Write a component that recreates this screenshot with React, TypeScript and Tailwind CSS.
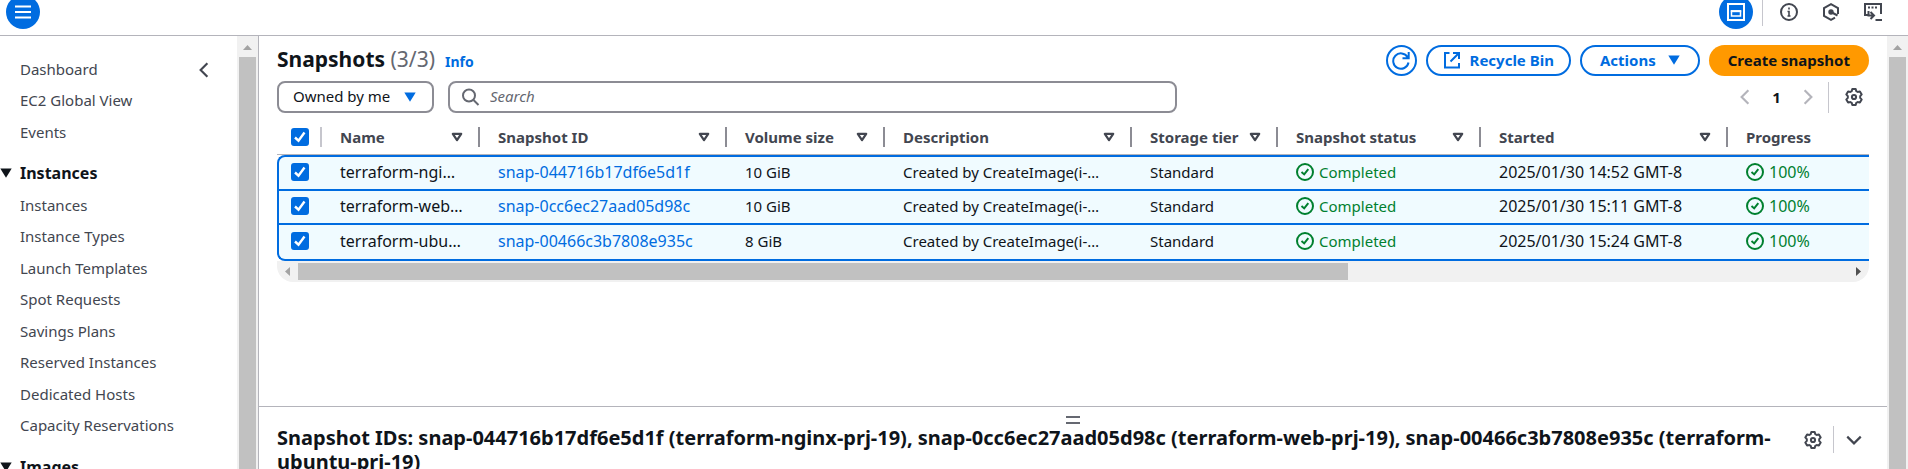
import React from "react";

const SANS = "font-['Noto_Sans','Open_Sans',sans-serif]";

const columns = [
  { label: "Name", width: "w-[158px]" },
  { label: "Snapshot ID", width: "w-[247px]" },
  { label: "Volume size", width: "w-[158px]" },
  { label: "Description", width: "w-[247px]" },
  { label: "Storage tier", width: "w-[146px]" },
  { label: "Snapshot status", width: "w-[203px]" },
  { label: "Started", width: "w-[247px]" },
  { label: "Progress", width: "" },
];

const rows = [
  { name: "terraform-ngi…", id: "snap-044716b17df6e5d1f", size: "10 GiB", started: "2025/01/30 14:52 GMT-8" },
  { name: "terraform-web…", id: "snap-0cc6ec27aad05d98c", size: "10 GiB", started: "2025/01/30 15:11 GMT-8" },
  { name: "terraform-ubu…", id: "snap-00466c3b7808e935c", size: "8 GiB", started: "2025/01/30 15:24 GMT-8" },
];

const topLinks = ["Dashboard", "EC2 Global View", "Events"];
const instanceLinks = [
  "Instances",
  "Instance Types",
  "Launch Templates",
  "Spot Requests",
  "Savings Plans",
  "Reserved Instances",
  "Dedicated Hosts",
  "Capacity Reservations",
];

function Triangle({ className = "" }: { className?: string }) {
  return (
    <svg viewBox="0 0 12 10" className={`h-[10px] w-3 shrink-0 fill-current ${className}`} aria-hidden="true">
      <path d="M0.3 0.5h11.4L6 9.700z" />
    </svg>
  );
}

function SortIcon() {
  return (
    <svg viewBox="0 0 12 10" className="h-[10px] w-3 shrink-0" fill="none" stroke="currentColor" strokeWidth="2.2" strokeLinejoin="round" aria-hidden="true">
      <path d="M1.800 1.800h8.400L6 8.200z" />
    </svg>
  );
}

function Gear() {
  return (
    <svg viewBox="0 0 18 18" className="size-[18px]" fill="none" stroke="currentColor" strokeWidth="2" strokeLinejoin="round" aria-hidden="true">
      <path d="M7.300 1h3.400l.6 2.200 1.400.8 2.200-.6 1.800 3L15.200 8.100v1.800l1.500 1.700-1.800 3-2.200-.6-1.400.8-.6 2.200H7.300l-.6-2.200-1.400-.8-2.200.6-1.800-3L2.800 9.900V8.100L1.300 6.400l1.800-3 2.200.6 1.400-.8z" />
      <circle cx="9" cy="9" r="2.100" />
    </svg>
  );
}

function Chevron({ d, className = "" }: { d: string; className?: string }) {
  return (
    <svg viewBox="0 0 16 16" className={`size-[18px] ${className}`} fill="none" stroke="currentColor" strokeWidth="1.9" aria-hidden="true">
      <path d={d} />
    </svg>
  );
}

function Checkbox({ label }: { label: string }) {
  return (
    <span className="relative block size-[18px]">
      <input type="checkbox" defaultChecked aria-label={label} className="block size-[18px] appearance-none rounded-[3px] border-2 border-[#8c8c94] checked:border-[#006ce0] checked:bg-[#006ce0]" />
      <svg viewBox="0 0 18 18" className="pointer-events-none absolute inset-0" fill="none" stroke="white" strokeWidth="2.4" aria-hidden="true">
        <path d="M4 9.500l3.500 3.200L13.500 4.500" />
      </svg>
    </span>
  );
}

function Status({ children }: { children: React.ReactNode }) {
  return (
    <span className="flex items-center gap-[5px] text-[#00802f]">
      <svg viewBox="0 0 18 18" className="size-[18px] shrink-0" fill="none" stroke="currentColor" strokeWidth="2" aria-hidden="true">
        <circle cx="9" cy="9" r="8" />
        <path d="M5.500 9l2.700 2.400L12.300 6.200" />
      </svg>
      {children}
    </span>
  );
}

function VerticalScrollbar() {
  return (
    <div className="flex w-[21px] shrink-0 flex-col bg-[#f1f1f1] px-0.5" aria-hidden="true">
      <svg viewBox="0 0 17 21" className="h-[21px] w-[17px] shrink-0 fill-[#a3a3a3]">
        <path d="M4 14h9L8.500 9z" />
      </svg>
      <div className="flex-1 bg-[#c1c1c1]" />
    </div>
  );
}

function NavLinks({ items, label }: { items: string[]; label: string }) {
  return (
    <ul aria-label={label} className="pl-5">
      {items.map((item) => (
        <li key={item} className="flex h-8 items-center odd:h-[31px]">
          <a href="#" className="text-[#424650]">{item}</a>
        </li>
      ))}
    </ul>
  );
}

function NavSection({ title }: { title: string }) {
  return (
    <button type="button" className="flex h-[42px] items-center gap-2 pt-2.5 font-bold text-[#0f141a]">
      <Triangle />
      <span className="text-base">{title}</span>
    </button>
  );
}

function TopBar() {
  return (
    <header className="flex h-9 shrink-0 items-center justify-between overflow-hidden border-b border-[#b4b4bb] pb-[11px] pl-1.5 pr-[26px]">
      <button type="button" aria-label="Open navigation" className="flex size-[34px] shrink-0 items-center justify-center rounded-full bg-[#006ce0] text-white">
        <svg viewBox="0 0 16 16" className="h-4 w-4" stroke="currentColor" strokeWidth="2" aria-hidden="true">
          <path d="M0 2.500h16M0 8h16M0 13.500h16" />
        </svg>
      </button>
      <div className="flex items-center text-[#424650]">
        <button type="button" aria-label="Split panel" className="flex size-[34px] items-center justify-center rounded-full bg-[#006ce0] text-white">
          <svg viewBox="0 0 18 18" className="size-[18px]" fill="none" stroke="currentColor" strokeWidth="2" aria-hidden="true">
            <path d="M1 1h16v16H1z" />
            <path d="M4.500 8h9v5h-9z" strokeWidth="1.500" />
            <path d="M3.800 8.200h10.400" />
          </svg>
        </button>
        <span className="ml-[9px] h-7 w-px bg-[#c6c6cd]" />
        <button type="button" aria-label="Info" className="ml-[17px]">
          <svg viewBox="0 0 18 18" className="size-[18px]" fill="none" stroke="currentColor" strokeWidth="2" aria-hidden="true">
            <circle cx="9" cy="9" r="8" />
            <path d="M9 4.500v2M7.500 8.500H9V13M7.500 13h3" strokeWidth="1.600" />
          </svg>
        </button>
        <button type="button" aria-label="Resources" className="ml-6">
          <svg viewBox="0 0 18 18" className="size-[18px]" fill="none" stroke="currentColor" strokeWidth="2" aria-hidden="true">
            <path d="M16 11V5L9 1.200 2 5v8l7 3.800 4-2.200" />
            <path d="M9 9l6.500 3.500" />
            <circle cx="9" cy="9" r="1.700" fill="currentColor" />
          </svg>
        </button>
        <button type="button" aria-label="Shell" className="ml-6">
          <svg viewBox="0 0 18 18" className="size-[18px]" fill="none" stroke="currentColor" strokeWidth="2" aria-hidden="true">
            <path d="M3.500 12H1V1h16v10M4.500 8v4.500h5M6.500 9l3.500 3.500L6.500 16M11.500 17H18" />
            <path d="M4 4.500h10" strokeDasharray="2 1.500" />
          </svg>
        </button>
      </div>
    </header>
  );
}

export default function App() {
  return (
    <div className={`${SANS} flex h-screen flex-col overflow-hidden bg-white text-[15px] leading-6 text-[#0f141a]`}>
      <TopBar />
      <div className="flex min-h-0 flex-1">
        <div className="flex w-[259px] shrink-0 border-r border-[#b4b4bb]">
          <nav aria-label="EC2" className="min-w-0 flex-1 overflow-hidden pt-[17px]">
            <div className="flex items-start">
              <div className="flex-1">
                <NavLinks items={topLinks} label="Overview" />
              </div>
              <button type="button" aria-label="Close navigation" className="mr-6 mt-2 text-[#424650]">
                <Chevron d="M11 2L5 8l6 6" />
              </button>
            </div>
            <NavSection title="Instances" />
            <NavLinks items={instanceLinks} label="Instances" />
            <NavSection title="Images" />
          </nav>
          <VerticalScrollbar />
        </div>

        <div className="flex min-w-0 flex-1 flex-col">
          <main className="min-h-0 flex-1 overflow-hidden px-[18px] pt-[9px]">
            <div className="flex items-start justify-between">
              <div className="flex items-baseline gap-2.5">
                <h1 className="text-[21px] font-bold leading-7">
                  Snapshots <span className="font-normal text-[#656871]">(3/3)</span>
                </h1>
                <a href="#" className="text-sm font-bold text-[#006ce0]">Info</a>
              </div>
              <div className="flex gap-[9px] font-bold">
                <button type="button" aria-label="Refresh" className="flex size-[31px] items-center justify-center rounded-full border-2 border-[#006ce0] text-[#006ce0]">
                  <svg viewBox="0 0 18 18" className="size-[18px]" fill="none" stroke="currentColor" strokeWidth="2" aria-hidden="true">
                    <path d="M16.500 10.500A7.700 7.700 0 1 1 15.600 5.200M16.700 0v6.300H10.500" />
                  </svg>
                </button>
                <a href="#" className="flex h-[31px] items-center gap-[9px] rounded-full border-2 border-[#006ce0] px-[15px] pb-0.5 text-[#006ce0]">
                  <svg viewBox="0 0 18 18" className="size-[18px]" fill="none" stroke="currentColor" strokeWidth="2" aria-hidden="true">
                    <path d="M6.500 2H2v14.500h14V12M10 2h6v6M16 2L7.500 10.500" />
                  </svg>
                  Recycle Bin
                </a>
                <button type="button" className="flex h-[31px] items-center gap-3 rounded-full border-2 border-[#006ce0] px-[18px] pb-0.5 text-[#006ce0]">
                  Actions
                  <Triangle />
                </button>
                <button type="button" className="h-[31px] rounded-full bg-[#ff9900] px-[19px] pb-0.5">Create snapshot</button>
              </div>
            </div>

            <div className="mt-[5px] flex items-center">
              <div className="relative">
                <select aria-label="Ownership filter" className="h-8 w-[157px] appearance-none rounded-lg border-2 border-[#8c8c94] bg-white pb-0.5 pl-3.5">
                  <option>Owned by me</option>
                </select>
                <Triangle className="pointer-events-none absolute right-[18px] top-[11px] text-[#006ce0]" />
              </div>
              <label className="ml-3.5 flex h-8 w-[729px] items-center gap-2.5 rounded-lg border-2 border-[#8c8c94] px-3 text-[#656871]">
                <svg viewBox="0 0 18 18" className="size-[18px] shrink-0" fill="none" stroke="currentColor" strokeWidth="2" aria-hidden="true">
                  <circle cx="7" cy="7.500" r="6" />
                  <path d="M11.500 12l5 5" />
                </svg>
                <input type="search" aria-label="Search snapshots" placeholder="Search" className="min-w-0 flex-1 pb-0.5 outline-none placeholder:italic placeholder:text-[#656871]" />
              </label>
              <div className="ml-auto flex items-center pr-1.5">
                <button type="button" aria-label="Previous page" className="text-[#b4b4bb]"><Chevron d="M11 2L5 8l6 6" /></button>
                <button type="button" className="w-[45px] text-center font-bold">1</button>
                <button type="button" aria-label="Next page" className="text-[#b4b4bb]"><Chevron d="M5 2l6 6-6 6" /></button>
                <span className="ml-[11px] h-[31px] w-px bg-[#c6c6cd]" />
                <button type="button" aria-label="Preferences" className="ml-4 text-[#424650]"><Gear /></button>
              </div>
            </div>

            <div className="overflow-hidden">
              <table className="w-full table-fixed border-separate border-spacing-0 text-left">
                <thead>
                  <tr className="h-[42px] text-[#424650]">
                    <th className="w-[45px] border-b border-[#b4b4bb] p-0 pt-1.5">
                      <div className="flex items-center justify-between pl-3.5">
                        <Checkbox label="Select all snapshots" />
                        <span className="h-5 w-0.5 bg-[#c6c6cd]" />
                      </div>
                    </th>
                    {columns.map((c) => (
                      <th key={c.label} className={`${c.width} border-b border-[#b4b4bb] p-0 pt-1.5 font-bold`}>
                        <div className="flex items-center pl-[18px]">
                          <span className="flex-1 whitespace-nowrap">{c.label}</span>
                          {c.width && (
                            <>
                              <SortIcon />
                              <span className="ml-[15px] h-5 w-0.5 bg-[#8c8c94]" />
                            </>
                          )}
                        </div>
                      </th>
                    ))}
                  </tr>
                </thead>
                <tbody>
                  {rows.map((r) => (
                    <tr
                      key={r.id}
                      className="h-[34px] whitespace-nowrap first:h-9 last:h-9 [&>td]:border-b-2 [&>td]:border-[#006ce0] [&>td]:bg-[#f0fbff] [&>td]:p-0 [&>td]:pb-0.5 [&>td]:pl-[18px] first:[&>td]:border-t-2 [&>td:first-child]:border-l-2 [&>td:first-child]:pl-3 first:[&>td:first-child]:rounded-tl-lg last:[&>td:first-child]:rounded-bl-lg"
                    >
                      <td><Checkbox label={`Select ${r.id}`} /></td>
                      <td className="text-base">{r.name}</td>
                      <td className="text-base"><a href="#" className="text-[#006ce0]">{r.id}</a></td>
                      <td>{r.size}</td>
                      <td>Created by CreateImage(i-…</td>
                      <td>Standard</td>
                      <td><Status>Completed</Status></td>
                      <td className="text-base">{r.started}</td>
                      <td className="text-base"><Status>100%</Status></td>
                    </tr>
                  ))}
                </tbody>
              </table>
              <div className="flex h-[21px] items-center overflow-hidden rounded-b-2xl bg-[#f1f1f1]" aria-hidden="true">
                <svg viewBox="0 0 21 17" className="h-[17px] w-[21px] fill-[#a3a3a3]"><path d="M13 4v9L8 8.500z" /></svg>
                <div className="flex h-[17px] flex-1"><div className="w-21/31 bg-[#c1c1c1]" /></div>
                <svg viewBox="0 0 21 17" className="h-[17px] w-[21px] fill-[#505050]"><path d="M8 4v9l5-4.500z" /></svg>
              </div>
            </div>
          </main>

          <section aria-label="Snapshot details" className="h-[63px] shrink-0 overflow-hidden border-t border-[#b4b4bb] px-[18px]">
            <div className="flex h-[19px] items-end justify-center">
              <button type="button" aria-label="Resize panel" className="text-[#656871]">
                <svg viewBox="0 0 14 11" className="h-[11px] w-3.5" stroke="currentColor" strokeWidth="2" aria-hidden="true"><path d="M0 2h14M0 8h14" /></svg>
              </button>
            </div>
            <div className="flex items-start justify-between">
              <h2 className="mr-6 flex-1 text-xl font-bold leading-6">
                Snapshot IDs: snap-044716b17df6e5d1f (terraform-nginx-prj-19), snap-0cc6ec27aad05d98c (terraform-web-prj-19), snap-00466c3b7808e935c (terraform-ubuntu-prj-19)
              </h2>
              <div className="flex shrink-0 items-center pr-1.5 text-[#424650]">
                <button type="button" aria-label="Panel preferences"><Gear /></button>
                <span className="ml-[11px] h-[27px] w-px bg-[#c6c6cd]" />
                <button type="button" aria-label="Collapse panel" className="ml-[11px]"><Chevron d="M2 5l6 6 6-6" /></button>
              </div>
            </div>
          </section>
        </div>
        <VerticalScrollbar />
      </div>
    </div>
  );
}
